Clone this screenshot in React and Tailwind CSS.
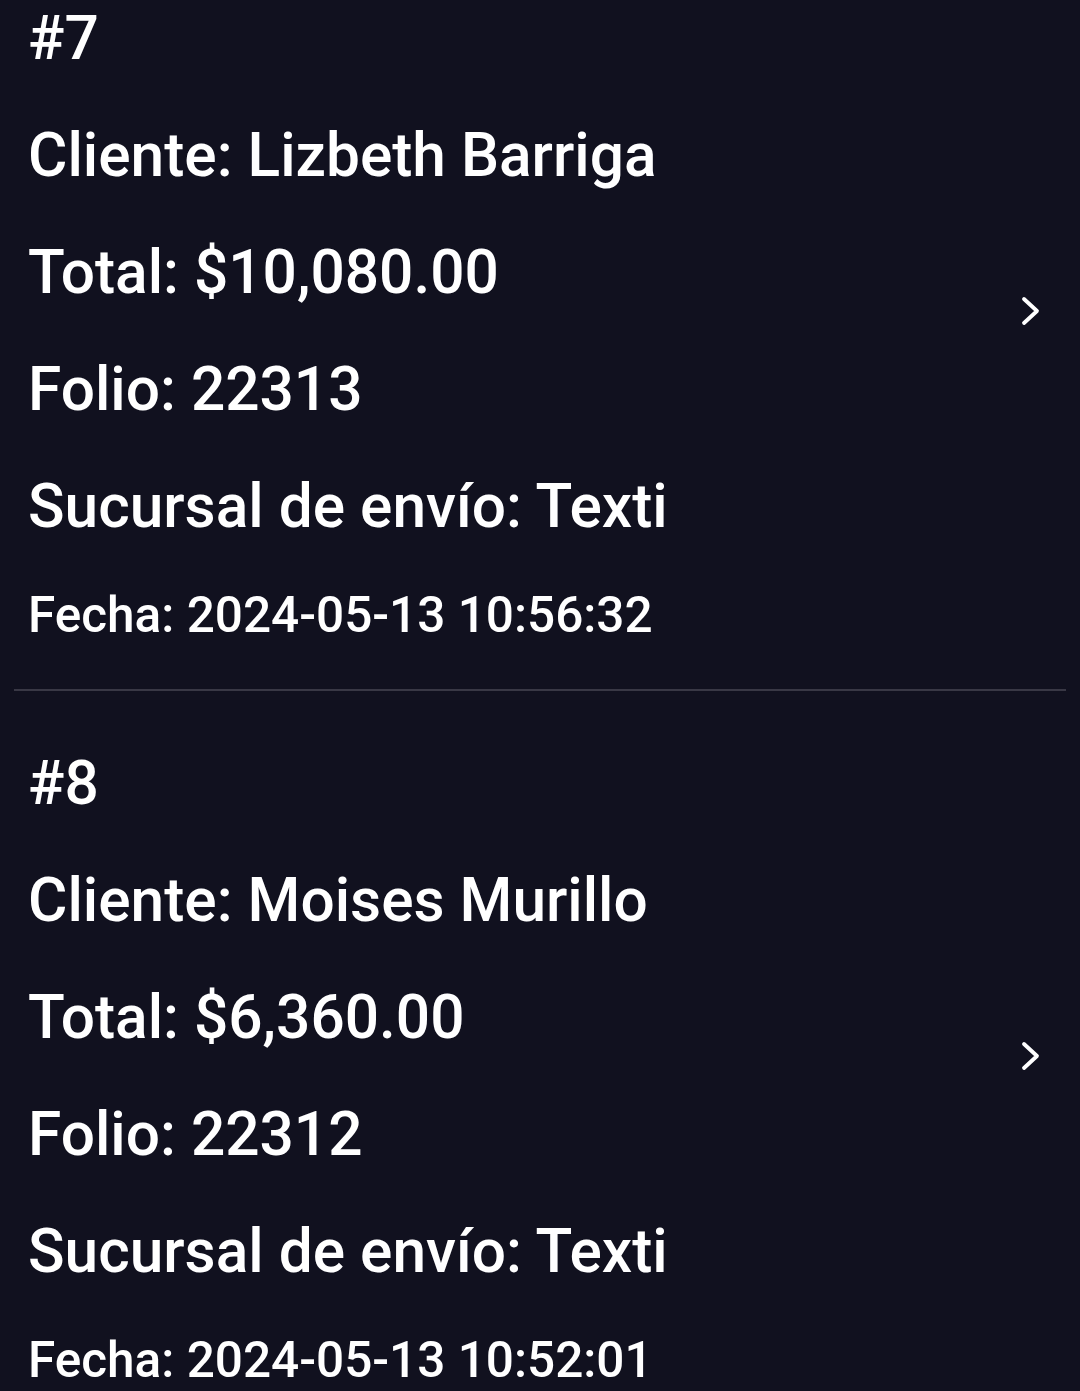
import { useState } from "react";

const pedidos = [
  {
    id: 7,
    cliente: "Lizbeth Barriga",
    total: "$10,080.00",
    folio: "22313",
    sucursal: "Texti",
    fecha: "2024-05-13 10:56:32",
  },
  {
    id: 8,
    cliente: "Moises Murillo",
    total: "$6,360.00",
    folio: "22312",
    sucursal: "Texti",
    fecha: "2024-05-13 10:52:01",
  },
];

function Chevron() {
  return (
    <svg width="24" height="34" viewBox="0 0 24 34" fill="none" className="mb-[24px] shrink-0">
      <path
        d="M4 5 L17 17 L4 29"
        stroke="#ffffff"
        strokeWidth="3.8"
        strokeLinecap="round"
        strokeLinejoin="round"
      />
    </svg>
  );
}

function PedidoItem({ pedido, onOpen }) {
  return (
    <button
      type="button"
      onClick={() => onOpen(pedido.id)}
      className="flex w-full items-center pl-[28px] pr-[36px] pt-[34px] pb-[24px] text-left"
    >
      <div className="flex-1 font-medium text-white">
        <p className="text-[60.4px] leading-[117px]">#{pedido.id}</p>
        <p className="text-[60.4px] leading-[117px]">Cliente: {pedido.cliente}</p>
        <p className="text-[60.4px] leading-[117px]">Total: {pedido.total}</p>
        <p className="text-[60.4px] leading-[117px]">Folio: {pedido.folio}</p>
        <p className="text-[60.4px] leading-[117px]">Sucursal de envío: {pedido.sucursal}</p>
        <p className="text-[49.5px] leading-[100px]">Fecha: {pedido.fecha}</p>
      </div>
      <Chevron />
    </button>
  );
}

export default function App() {
  const [selected, setSelected] = useState(null);

  return (
    <div className="h-[1391px] overflow-hidden bg-[#11111f] font-['Roboto',sans-serif]">
      <div className="-mt-[54px]">
        {pedidos.map((p, i) => (
          <div key={p.id}>
            <PedidoItem pedido={p} onOpen={setSelected} />
            {i < pedidos.length - 1 && (
              <div className="mx-[14px] h-[2px] bg-[#393845]" />
            )}
          </div>
        ))}
      </div>
    </div>
  );
}
